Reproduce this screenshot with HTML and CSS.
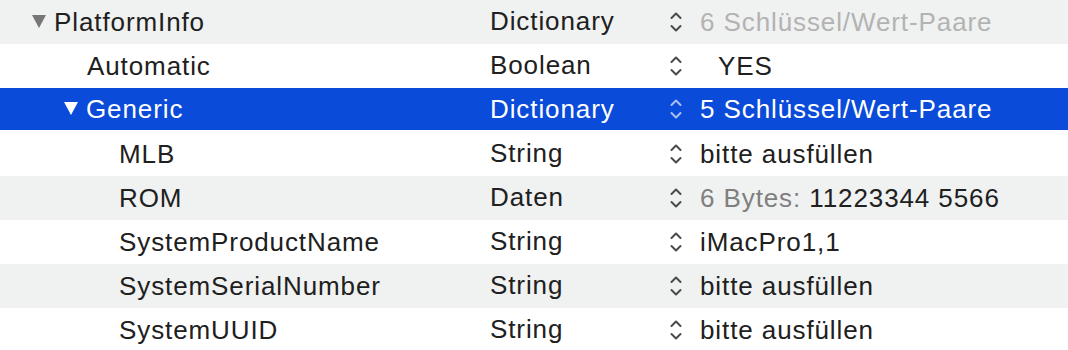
FILE: index.html
```html
<!DOCTYPE html>
<html lang="de">
<head>
    <meta charset="UTF-8">
    <meta name="viewport" content="width=device-width, initial-scale=1.0">
    <title>PlatformInfo</title>
    <link rel="stylesheet" href="styles.css">
</head>
<body>

    <div class="outline">
        <div class="row alt">
            <div class="key lvl0"><span class="disclosure"></span>PlatformInfo</div>
            <div class="type">Dictionary</div>
            <div class="value">
                <svg class="stepper" viewBox="0 0 12 22"><polyline points="1.5,7 6,2.5 10.5,7"/><polyline points="1.5,15 6,19.5 10.5,15"/></svg>
                <span class="muted">6 Schlüssel/Wert-Paare</span>
            </div>
        </div>

        <div class="row">
            <div class="key lvl1">Automatic</div>
            <div class="type">Boolean</div>
            <div class="value">
                <svg class="stepper" viewBox="0 0 12 22"><polyline points="1.5,7 6,2.5 10.5,7"/><polyline points="1.5,15 6,19.5 10.5,15"/></svg>
                <span class="bool">YES</span>
            </div>
        </div>

        <div class="row selected">
            <div class="key lvl1 open"><span class="disclosure"></span>Generic</div>
            <div class="type">Dictionary</div>
            <div class="value">
                <svg class="stepper" viewBox="0 0 12 22"><polyline points="1.5,7 6,2.5 10.5,7"/><polyline points="1.5,15 6,19.5 10.5,15"/></svg>
                <span>5 Schlüssel/Wert-Paare</span>
            </div>
        </div>

        <div class="row">
            <div class="key lvl2">MLB</div>
            <div class="type">String</div>
            <div class="value">
                <svg class="stepper" viewBox="0 0 12 22"><polyline points="1.5,7 6,2.5 10.5,7"/><polyline points="1.5,15 6,19.5 10.5,15"/></svg>
                <span>bitte ausfüllen</span>
            </div>
        </div>

        <div class="row alt">
            <div class="key lvl2">ROM</div>
            <div class="type">Daten</div>
            <div class="value">
                <svg class="stepper" viewBox="0 0 12 22"><polyline points="1.5,7 6,2.5 10.5,7"/><polyline points="1.5,15 6,19.5 10.5,15"/></svg>
                <span><span class="label">6 Bytes:</span> 11223344 5566</span>
            </div>
        </div>

        <div class="row">
            <div class="key lvl2">SystemProductName</div>
            <div class="type">String</div>
            <div class="value">
                <svg class="stepper" viewBox="0 0 12 22"><polyline points="1.5,7 6,2.5 10.5,7"/><polyline points="1.5,15 6,19.5 10.5,15"/></svg>
                <span>iMacPro1,1</span>
            </div>
        </div>

        <div class="row alt">
            <div class="key lvl2">SystemSerialNumber</div>
            <div class="type">String</div>
            <div class="value">
                <svg class="stepper" viewBox="0 0 12 22"><polyline points="1.5,7 6,2.5 10.5,7"/><polyline points="1.5,15 6,19.5 10.5,15"/></svg>
                <span>bitte ausfüllen</span>
            </div>
        </div>

        <div class="row">
            <div class="key lvl2">SystemUUID</div>
            <div class="type">String</div>
            <div class="value">
                <svg class="stepper" viewBox="0 0 12 22"><polyline points="1.5,7 6,2.5 10.5,7"/><polyline points="1.5,15 6,19.5 10.5,15"/></svg>
                <span>bitte ausfüllen</span>
            </div>
        </div>
    </div>

</body>
</html>
```

FILE: styles.css
```css
body {
    margin: 0;
    background: #fff;
    font-family: 'Liberation Sans', Arial, sans-serif;
    font-size: 26px;
    letter-spacing: 0.9px;
    color: #202020;
    overflow: hidden;
}

.outline {
    width: 1068px;
}

.row {
    display: grid;
    grid-template-columns: 490px 178px 1fr;
    height: 44px;
    box-sizing: border-box;
    line-height: 42px;
    white-space: nowrap;
}

.row.alt {
    background: #f0f1f1;
}

.row.selected {
    padding-bottom: 2px;
    background: #0a4bd9;
    background-clip: content-box;
    color: #fff;
}

.key {
    display: flex;
    align-items: center;
}

.lvl0 {
    padding-left: 32px;
}

.lvl1 {
    padding-left: 87px;
}

.lvl1.open {
    padding-left: 64px;
}

.lvl2 {
    padding-left: 119px;
}

.disclosure {
    width: 0;
    height: 0;
    border-left: 7.5px solid transparent;
    border-right: 7.5px solid transparent;
    border-top: 13px solid #777;
    margin-right: 8px;
    margin-top: -2px;
}

.selected .disclosure {
    border-top-color: #fff;
}

.value {
    display: flex;
    align-items: center;
}

.stepper {
    width: 12px;
    height: 22px;
    margin-left: 2px;
    margin-right: 18px;
    margin-top: -1px;
    fill: none;
    stroke: #4a4a4a;
    stroke-width: 2;
    stroke-linecap: round;
    stroke-linejoin: round;
}

.selected .stepper {
    stroke: #a9c0f2;
}

.muted {
    color: #b3b3b3;
}

.label {
    color: #7f7f7f;
}

.bool {
    padding-left: 18px;
}
```
